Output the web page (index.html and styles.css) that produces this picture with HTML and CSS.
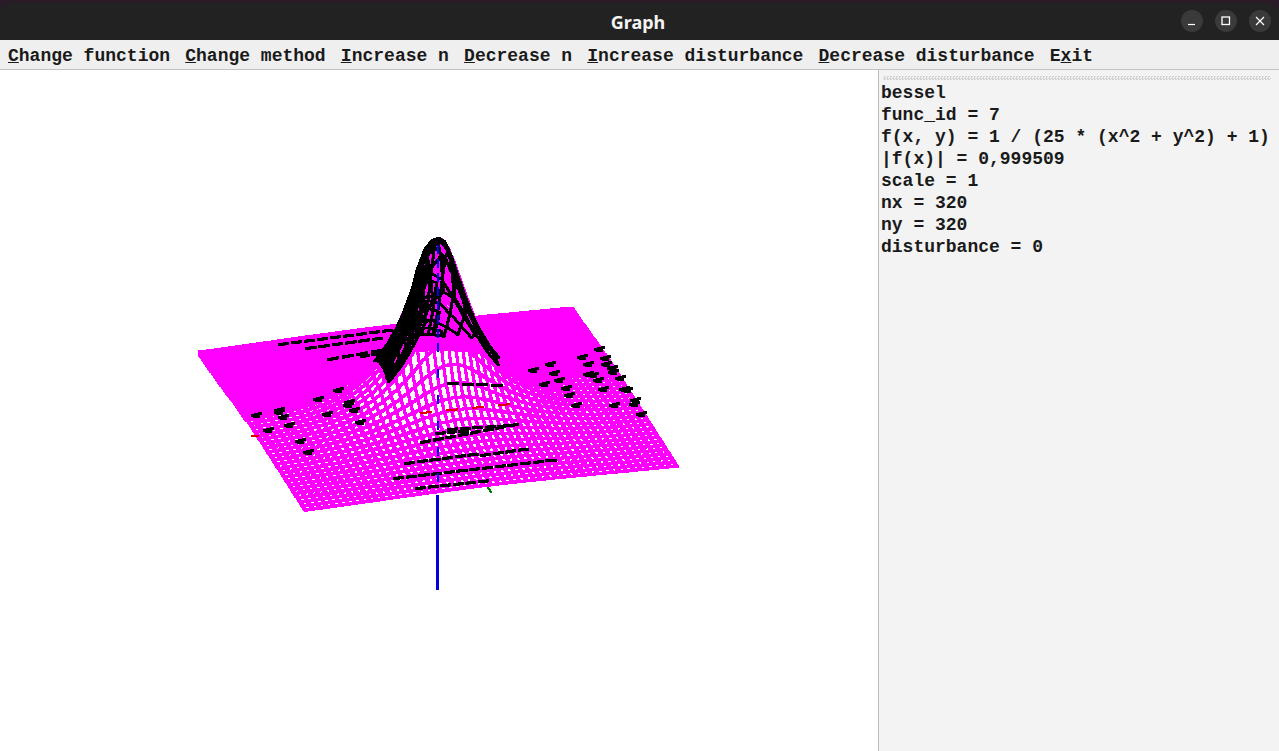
FILE: index.html
```html
<!DOCTYPE html>
<html>
<head>
    <title>Graph</title>
    <link rel="stylesheet" href="styles.css">
</head>
<body>
    <div class="window">
        <div class="titlebar">
            <span class="title">Graph</span>
            <div class="controls">
                <span class="control">
                    <svg width="12" height="12" viewBox="0 0 12 12"><path d="M2 9.5 H9" stroke="#fff" stroke-width="1.2" fill="none"/></svg>
                </span>
                <span class="control">
                    <svg width="12" height="12" viewBox="0 0 12 12"><rect x="2" y="2" width="7.5" height="7.5" stroke="#fff" stroke-width="1.3" fill="none"/></svg>
                </span>
                <span class="control">
                    <svg width="12" height="12" viewBox="0 0 12 12"><path d="M2 2 L10 10 M10 2 L2 10" stroke="#fff" stroke-width="1.2" fill="none"/></svg>
                </span>
            </div>
        </div>

        <div class="menubar">
            <span class="menu-item"><u>C</u>hange function</span>
            <span class="menu-item"><u>C</u>hange method</span>
            <span class="menu-item"><u>I</u>ncrease n</span>
            <span class="menu-item"><u>D</u>ecrease n</span>
            <span class="menu-item"><u>I</u>ncrease disturbance</span>
            <span class="menu-item"><u>D</u>ecrease disturbance</span>
            <span class="menu-item">E<u>x</u>it</span>
        </div>

        <div class="content">
            <canvas id="plot" width="878" height="681"></canvas>
            <div class="info">
                <div class="handle"></div>
                <div class="info-line">bessel</div>
                <div class="info-line">func_id = 7</div>
                <div class="info-line">f(x, y) = 1 / (25 * (x^2 + y^2) + 1)</div>
                <div class="info-line">|f(x)| = 0,999509</div>
                <div class="info-line">scale = 1</div>
                <div class="info-line">nx = 320</div>
                <div class="info-line">ny = 320</div>
                <div class="info-line">disturbance = 0</div>
            </div>
        </div>
    </div>

    <script src="plot.js"></script>
</body>
</html>
```

FILE: styles.css
```css
html, body {
    margin: 0;
    height: 100%;
    overflow: hidden;
    background: #2b1a28;
}
.window {
    margin-top: 3px;
    height: 748px;
    display: flex;
    flex-direction: column;
}
.titlebar {
    height: 37px;
    flex: none;
    background: #222222;
    border-radius: 10px 10px 0 0;
    display: flex;
    align-items: center;
    justify-content: center;
    position: relative;
}
.title {
    color: #f4f4f4;
    font-family: "Noto Sans", sans-serif;
    font-weight: 700;
    font-size: 18px;
    margin-right: 3px;
}
.controls {
    position: absolute;
    right: 8px;
    top: 7px;
    display: flex;
    gap: 12px;
}
.control {
    width: 22px;
    height: 22px;
    border-radius: 50%;
    background: #3a3a3a;
    display: flex;
    align-items: center;
    justify-content: center;
}
.menubar {
    height: 26px;
    padding-top: 3px;
    flex: none;
    background: #efefef;
    border-bottom: 1px solid #c2c2c2;
    padding-left: 8px;
    display: flex;
    align-items: center;
    gap: 15.2px;
    font-family: "Liberation Mono", monospace;
    font-weight: 700;
    font-size: 18px;
    color: #1a1a1a;
    white-space: pre;
}
.content {
    flex: 1;
    display: flex;
    min-height: 0;
    background: #fff;
}
#plot {
    display: block;
    width: 878px;
    height: 681px;
    flex: none;
}
.info {
    flex: 1;
    background: #f3f3f3;
    border-left: 1px solid #bdbdbd;
    padding: 6px 2px 0 2px;
    font-family: "Liberation Mono", monospace;
    font-weight: 700;
    font-size: 18px;
    color: #1a1a1a;
}
.handle {
    height: 4px;
    margin: 0 6px 2px 2px;
    background-image: repeating-conic-gradient(#d2d2d2 0 25%, transparent 0 50%);
    background-size: 3px 3px;
}
.info-line {
    height: 22px;
    line-height: 22px;
    white-space: pre;
}
```

FILE: plot.js
```js
const canvas = document.getElementById('plot');
const ctx = canvas.getContext('2d');
const OFFSET_Y = 70; // canvas starts under the menu bar

// Orthographic projection read off the corners of the plane
function project(u, v, z) {
    return [
        436 + 185.5 * u + 53 * v,
        411 - OFFSET_Y - 22 * u + 79 * v - 174 * z
    ];
}

function f(u, v) {
    return 1 / (25 * (u * u + v * v) + 1);
}

// Hard pixel line with a w x h pen, no antialiasing
function line(x0, y0, x1, y1, w, color, h = w) {
    ctx.fillStyle = color;
    const steps = Math.ceil(Math.max(Math.abs(x1 - x0), Math.abs(y1 - y0))) || 1;
    for (let i = 0; i <= steps; i++) {
        const x = Math.round(x0 + (x1 - x0) * i / steps);
        const y = Math.round(y0 + (y1 - y0) * i / steps);
        ctx.fillRect(x, y, w, h);
    }
}

// keep(u, v) picks the nodes to draw, pen(u, v) the [w, h] of the pen
function drawMesh(nu, nv, color, pen, keep) {
    for (let i = 0; i <= nu; i++) {
        for (let j = 0; j <= nv; j++) {
            const u = -1 + 2 * i / nu, v = -1 + 2 * j / nv;
            if (!keep(u, v)) continue;
            const a = project(u, v, f(u, v));
            const [w, h] = pen(u, v);
            if (i < nu) {
                const u2 = -1 + 2 * (i + 1) / nu;
                if (keep(u2, v)) {
                    const b = project(u2, v, f(u2, v));
                    line(a[0], a[1], b[0], b[1], w, color, h);
                }
            }
            if (j < nv) {
                const v2 = -1 + 2 * (j + 1) / nv;
                if (keep(u, v2)) {
                    const b = project(u, v2, f(u, v2));
                    line(a[0], a[1], b[0], b[1], w, color, h);
                }
            }
        }
    }
}

const MAGENTA = '#ff00ff', BLACK = '#000000', BLUE = '#0000e0', RED = '#e00000', GREEN = '#008000';

function onPeak(u, v) {
    return f(u, v) >= 0.27 && v < 0.16;
}

// the rows close up towards the back of the plane
drawMesh(52, 40, MAGENTA, (u, v) => {
    const r = Math.hypot(u, v);
    if (v < -0.45) return [5, 5];
    if (r < 0.5) return [3, 3];
    return v < -0.1 ? [5, 4] : [4, 3];
}, () => true);

drawMesh(70, 70, MAGENTA, () => [4, 3], onPeak);
drawMesh(34, 34, BLACK, () => [3, 2], onPeak);
drawMesh(60, 60, BLACK, () => [3, 2], (u, v) => onPeak(u, v) && u + v * 0.5 < -0.02);

// silhouette of the peak, in window coordinates
const silhouette = [
    [385, 375], [393, 350], [401, 325], [409, 295], [416, 268], [424, 247], [431, 239],
    [437, 237], [443, 240], [450, 256], [458, 280], [466, 303], [476, 325], [488, 345], [497, 356]
];
silhouette.forEach((a, i) => {
    if (i) {
        const b = silhouette[i - 1];
        line(b[0], b[1] - OFFSET_Y, a[0], a[1] - OFFSET_Y, i < 8 ? 4 : 3, BLACK);
    }
});

// black blobs left by the overlapping rows, in window coordinates
const blobs = [
    [337, 388], [317, 397], [278, 408], [348, 400], [255, 413], [347, 403], [326, 412],
    [278, 410], [288, 423], [267, 428], [299, 439], [307, 450], [359, 420], [353, 408],
    [282, 415], [532, 368], [553, 371], [558, 378], [543, 382], [565, 386], [568, 393],
    [587, 372], [592, 373], [602, 387], [597, 378], [575, 403], [613, 403], [623, 387],
    [612, 370], [605, 362], [587, 362], [633, 402], [640, 412], [549, 362], [581, 355],
    [598, 347], [604, 356], [611, 366], [619, 376], [626, 388], [634, 398]
];
blobs.forEach(([x, y]) => {
    const top = y - OFFSET_Y;
    line(x - 4, top + 1, x + 4, top - 1, 3, BLACK);
    line(x - 2, top + 3, x + 3, top + 3, 2, BLACK);
});

// long broken strokes: [x0, y0, x1, y1]
const strokes = [
    [278, 343, 395, 328], [305, 347, 385, 336], [327, 358, 385, 348], [360, 355, 382, 351],
    [393, 477, 558, 458], [415, 487, 490, 479], [420, 441, 520, 422], [404, 462, 480, 452],
    [480, 454, 530, 447], [435, 432, 470, 429], [447, 382, 505, 384], [447, 428, 510, 424]
];
strokes.forEach(([x0, y0, x1, y1]) => {
    const n = Math.round((x1 - x0) / 13);
    for (let i = 0; i < n; i++) {
        const a = i / n, b = (i + 0.65) / n;
        line(x0 + (x1 - x0) * a, y0 + (y1 - y0) * a - OFFSET_Y,
             x0 + (x1 - x0) * b, y0 + (y1 - y0) * b - OFFSET_Y, 3, BLACK);
    }
});

// axes
line(436, 495 - OFFSET_Y, 436, 587 - OFFSET_Y, 3, BLUE);
for (let y = 245; y < 490; y += y < 340 ? 14 : 26) {
    line(437, y - OFFSET_Y, 437, y + 7 - OFFSET_Y, 2, BLUE);
}
line(251, 435 - OFFSET_Y, 257, 435 - OFFSET_Y, 2, RED);
for (let x = 420; x < 500; x += 26) {
    const y = 412 - (x - 420) * 0.1;
    line(x, y - OFFSET_Y, x + 10, y - 1 - OFFSET_Y, 2, RED);
}
line(487, 487 - OFFSET_Y, 490, 491 - OFFSET_Y, 2, GREEN);
```
